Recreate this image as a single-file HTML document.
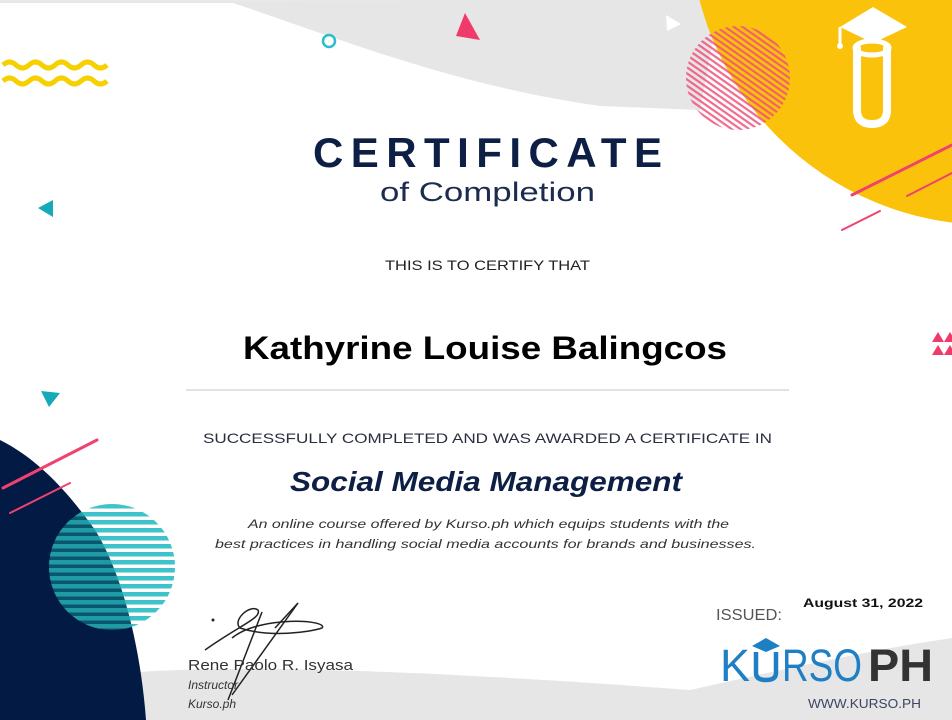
<!DOCTYPE html>
<html><head><meta charset="utf-8"><style>
html,body{margin:0;padding:0;background:#fff;}
body{width:952px;height:720px;overflow:hidden;}
svg{display:block}
</style></head><body>
<svg width="952" height="720" viewBox="0 0 952 720" xmlns="http://www.w3.org/2000/svg" font-family="Liberation Sans, sans-serif">
<defs>
<pattern id="hp" width="5" height="5" patternUnits="userSpaceOnUse" patternTransform="rotate(35)">
<rect width="5" height="2.2" fill="#f0507a"/>
</pattern>
<pattern id="tp" width="8" height="8" patternUnits="userSpaceOnUse">
<rect width="8" height="4.5" fill="#3ec3cb"/>
</pattern>
<clipPath id="tc"><circle cx="112" cy="567" r="63"/></clipPath>
<clipPath id="nv"><path d="M0,440 C40,460 70,495 95,530 C120,570 140,640 146,720 L0,720 Z"/></clipPath>
</defs>
<rect width="952" height="720" fill="#fff"/>
<rect width="952" height="3" fill="#e8e8e8"/>
<path d="M230,2 C330,35 450,85 600,106 L700,110 L720,0 Z" fill="#e6e6e6"/>
<path d="M140,672 C250,664 450,672 690,690 C780,670 870,650 952,638 L952,720 L140,720 Z" fill="#e6e6e6"/>
<circle cx="990" cy="-75" r="300" fill="#fbc20b"/>
<circle cx="738" cy="78" r="52" fill="url(#hp)" opacity="0.85"/>
<g fill="none" stroke="#fff" stroke-width="8" stroke-linecap="round">
<path d="M857,48 L857,110 Q857,124 872,124 Q887,124 887,110 L887,48"/>
<ellipse cx="872" cy="48" rx="17" ry="7" stroke-width="5"/>
</g>
<path d="M840,27 L873,7 L907,27 L873,43 Z" fill="#fff"/>
<path d="M840,27 L840,45" stroke="#fff" stroke-width="3"/>
<circle cx="840" cy="46" r="3" fill="#fff"/>
<path d="M465,13 L480,40 L456,36 Z" fill="#f03a6a"/>
<path d="M666,15 L681,24 L667,31 Z" fill="#fff"/>
<circle cx="329" cy="41" r="6" fill="none" stroke="#2bbfcb" stroke-width="2.5"/>
<path d="M38,208 L53,200 L53,217 Z" fill="#16a9b9"/>
<path d="M41,391 L60,393 L49,407 Z" fill="#16a9b9"/>
<g fill="#f03a6a">
<path d="M938,332 L944,342 L932,342 Z"/><path d="M950,332 L956,342 L944,342 Z"/>
<path d="M938,345 L944,355 L932,355 Z"/><path d="M950,345 L956,355 L944,355 Z"/>
</g>
<g fill="none" stroke="#f7d000" stroke-width="5">
<path d="M3,65 q6.5,-6 13,0 t13,0 t13,0 t13,0 t13,0 t13,0 t13,0 t13,0"/>
<path d="M3,81 q6.5,-6 13,0 t13,0 t13,0 t13,0 t13,0 t13,0 t13,0 t13,0"/>
</g>
<path d="M0,440 C40,460 70,495 95,530 C120,570 140,640 146,720 L0,720 Z" fill="#031b44"/>
<rect x="40" y="500" width="140" height="140" fill="url(#tp)" clip-path="url(#tc)"/>
<g clip-path="url(#nv)"><g clip-path="url(#tc)"><rect x="40" y="500" width="140" height="140" fill="#0e7f8c" opacity="0.6"/></g></g>
<g stroke="#f0426e" stroke-width="3" stroke-linecap="round">
<line x1="852" y1="195" x2="952" y2="145"/>
<line x1="907" y1="196" x2="952" y2="173" stroke-width="2"/>
<line x1="842" y1="230" x2="880" y2="211" stroke-width="2"/>
<line x1="3" y1="488" x2="97" y2="440"/>
<line x1="10" y1="513" x2="70" y2="483" stroke-width="2"/>
</g>
<text x="313" y="167" font-size="42" font-weight="bold" fill="#0d1f45" textLength="349" lengthAdjust="spacing">CERTIFICATE</text>
<text x="380" y="201" font-size="27" fill="#1c2b4e" textLength="215" lengthAdjust="spacingAndGlyphs">of Completion</text>
<text x="385" y="270" font-size="14" fill="#222" textLength="205" lengthAdjust="spacingAndGlyphs">THIS IS TO CERTIFY THAT</text>
<text x="243" y="359" font-size="32" font-weight="bold" fill="#000" textLength="484" lengthAdjust="spacingAndGlyphs">Kathyrine Louise Balingcos</text>
<rect x="186" y="389" width="603" height="2" fill="#e2e2e2"/>
<text x="203" y="443" font-size="14" fill="#2a2f3f" textLength="569" lengthAdjust="spacingAndGlyphs">SUCCESSFULLY COMPLETED AND WAS AWARDED A CERTIFICATE IN</text>
<text x="290" y="491" font-size="28" font-weight="bold" font-style="italic" fill="#0d1f45" textLength="392" lengthAdjust="spacingAndGlyphs">Social Media Management</text>
<text x="248" y="528" font-size="12" font-style="italic" fill="#333" textLength="481" lengthAdjust="spacingAndGlyphs">An online course offered by Kurso.ph which equips students with the</text>
<text x="215" y="548" font-size="12" font-style="italic" fill="#333" textLength="541" lengthAdjust="spacingAndGlyphs">best practices in handling social media accounts for brands and businesses.</text>
<g fill="none" stroke="#222" stroke-width="1.5">
<path d="M205,650 C240,625 262,618 258,610 C250,604 232,620 240,628 C270,638 310,632 322,628 C330,620 260,615 232,638"/>
<path d="M262,612 L228,700"/><path d="M298,603 L232,695"/><path d="M298,603 L275,628"/>
</g>
<circle cx="213" cy="620" r="1.5" fill="#222"/>
<text x="188" y="670" font-size="15" fill="#333" textLength="165" lengthAdjust="spacingAndGlyphs">Rene Paolo R. Isyasa</text>
<text x="188" y="689" font-size="12" font-style="italic" fill="#333">Instructor</text>
<text x="188" y="708" font-size="12" font-style="italic" fill="#333">Kurso.ph</text>
<text x="716" y="620" font-size="16" fill="#555" textLength="66" lengthAdjust="spacingAndGlyphs">ISSUED:</text>
<text x="803" y="607" font-size="12" font-weight="bold" fill="#111" textLength="120" lengthAdjust="spacingAndGlyphs">August 31, 2022</text>
<text x="720" y="681" font-size="45" fill="#1f7fc4" textLength="30" lengthAdjust="spacingAndGlyphs">K</text>
<path d="M756,652 L756,673 Q756,680 766,680 Q776,680 776,673 L776,652" fill="none" stroke="#1f7fc4" stroke-width="4.5"/>
<path d="M752,646 L766,638 L780,646 L766,652 Z" fill="#1f7fc4"/>
<text x="782" y="681" font-size="45" fill="#1f7fc4" textLength="80" lengthAdjust="spacingAndGlyphs">RSO</text>
<text x="868" y="681" font-size="45" font-weight="bold" fill="#333" textLength="65" lengthAdjust="spacingAndGlyphs">PH</text>
<text x="808" y="708" font-size="13" fill="#3d4560" textLength="113" lengthAdjust="spacingAndGlyphs">WWW.KURSO.PH</text>
</svg>
</body></html>
